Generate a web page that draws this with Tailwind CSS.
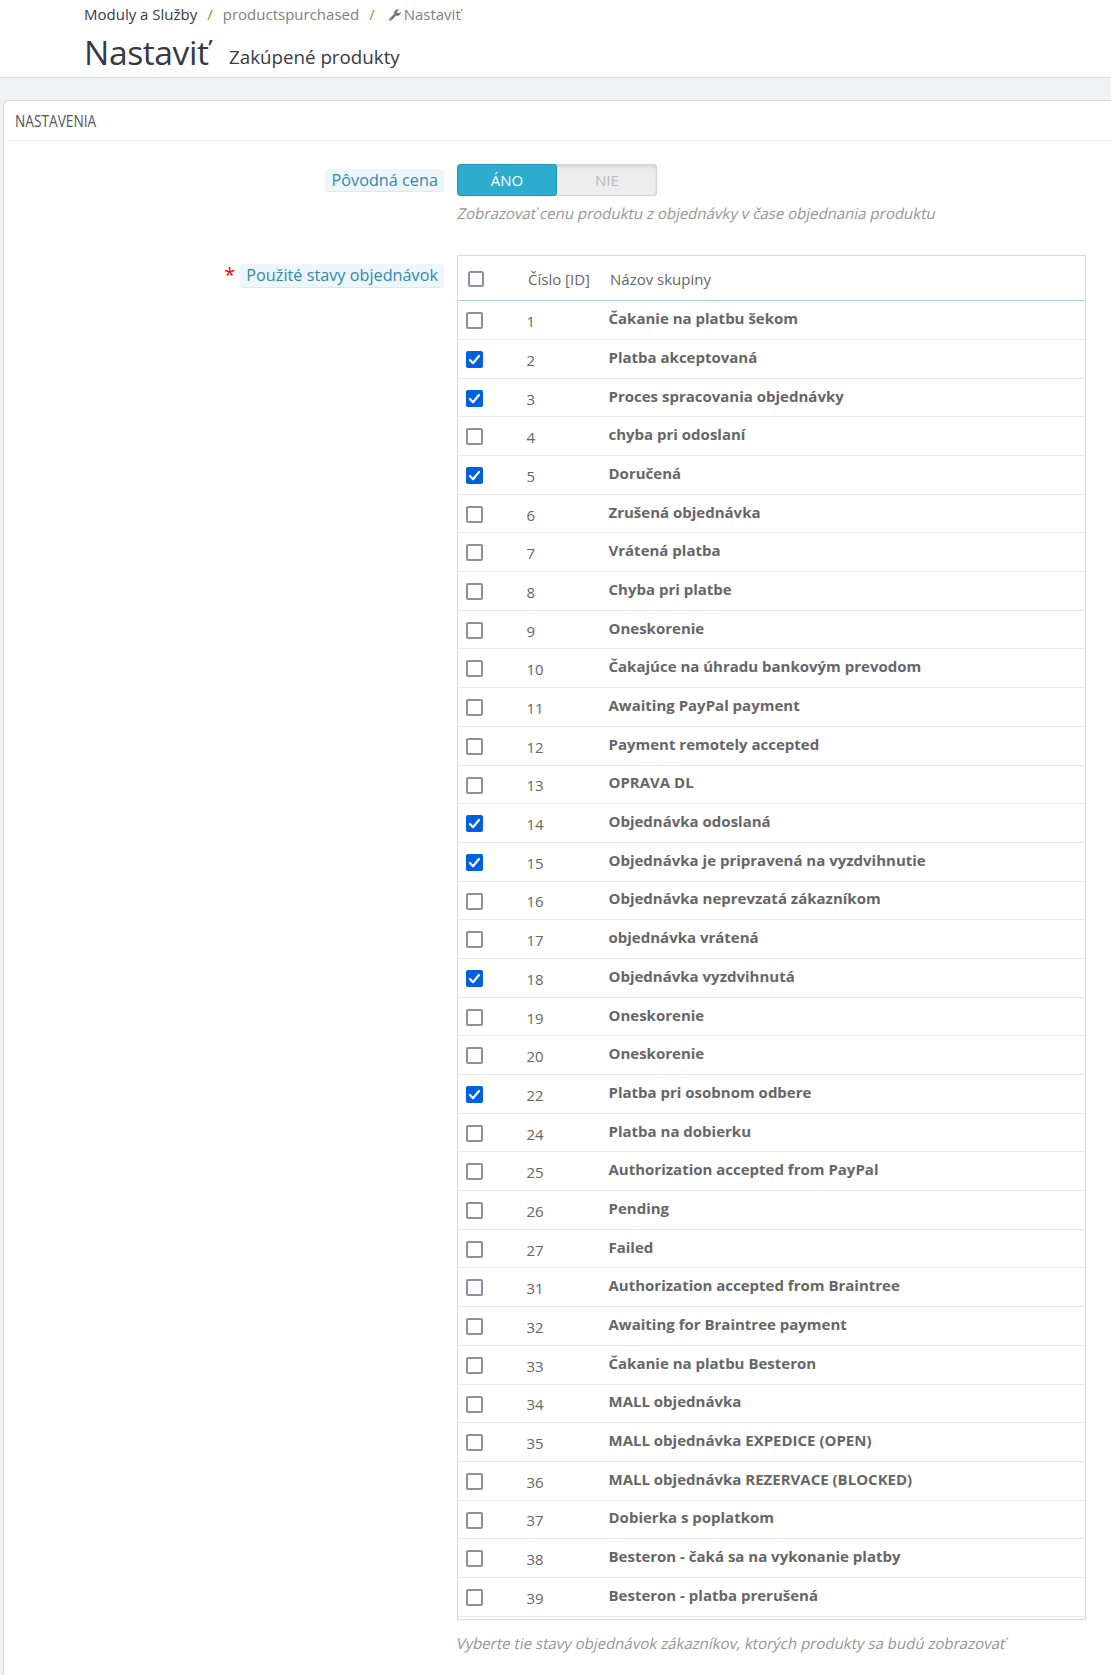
<!DOCTYPE html>
<html lang="sk">
<head>
<meta charset="utf-8">
<title>Nastaviť</title>
<script src="https://cdn.jsdelivr.net/npm/@tailwindcss/browser@4"></script>
</head>
<body class="bg-[#eff1f2] font-['Open_Sans','Noto_Sans',sans-serif] text-[#666] h-[1675px] overflow-hidden flex flex-col">
<header class="h-[78px] shrink-0 bg-white border-b border-[#dcdee0] pl-[84px] text-[#363a41]">
  <nav class="flex items-center h-[29px] text-[15px] whitespace-nowrap">
    <span>Moduly a Služby</span>
    <span class="w-[25.500px] text-center text-[#5fa82f]">/</span>
    <span class="text-[#808080]">productspurchased</span>
    <span class="w-[25.500px] text-center text-[#5fa82f]">/</span>
    <svg class="w-[12px] h-[12px] ml-[4px] mr-[3px]" viewBox="0 0 12 12" fill="#777"><path fill-rule="evenodd" d="M.5 9.6 5.3 4.8A3.6 3.6 0 0 1 8.7.2c.6 0 1.300.2 1.800.5L8.300 2v1.500l1.400.8 2.100-1.300c.2.700 0 1.500-.3 2.100a3.600 3.600 0 0 1-4.300 1.500L2.400 11.500a1.300 1.300 0 0 1-1.900 0 1.300 1.300 0 0 1 0-1.900zM1.700 10a.5.5 0 1 0 0 1 .5.5 0 0 0 0-1z"/></svg>
    <span class="text-[#808080]">Nastaviť</span>
  </nav>
  <div class="flex items-baseline h-[48px] whitespace-nowrap">
    <h1 class="text-[33.600px] leading-[46px] w-[145px] tracking-[-0.400px]">Nastaviť</h1>
    <h4 class="text-[18.750px] -translate-y-px">Zakúpené produkty</h4>
  </div>
</header>
<main class="mt-[22px] ml-[3px] flex-1 bg-white border-l border-t border-[#d0d8db] rounded-tl-[6px] pl-[5px]">
  <h3 class="h-[40px] border-b border-[#eaedef] pl-[6px] flex items-center text-[16.800px] text-[#555]"><span class="origin-left scale-x-[0.815]">NASTAVENIA</span></h3>
  <div class="flex mt-[23px]">
    <div class="w-[435px] shrink-0 flex justify-end items-start pt-[5px]">
      <span class="h-[23px] leading-[22px] px-[6px] rounded-[4px] bg-[#edf7fb] border-b border-[#d8ebf3] text-[#3586ae] text-[16.250px]">Pôvodná cena</span>
    </div>
    <div class="ml-[13px]">
      <div class="flex w-[200px] h-[32px] rounded-[4px] bg-[#ededed] shadow-[inset_0_0_0_1px_#d4d4d4,inset_0_2px_4px_#00000026] text-[15px] text-center leading-[32px] overflow-hidden">
        <span class="w-[100px] bg-[#2eacce] text-white rounded-[3px] border border-[#2494b3] leading-[30px]">ÁNO</span>
        <span class="w-[100px] text-[#bbb]">NIE</span>
      </div>
      <p class="w-max -skew-x-12 text-[15px] leading-[20px] mt-[7px] ml-[0.500px] text-[#959595]">Zobrazovať cenu produktu z objednávky v čase objednania produktu</p>
    </div>
  </div>
  <div class="flex mt-[32px]">
    <div class="w-[435px] shrink-0 flex justify-end items-start pt-[9px]">
      <span class="text-[#f00] text-[20px] leading-[22px] mr-[5px]">*</span>
      <span class="h-[24px] leading-[22px] px-[6px] rounded-[4px] bg-[#edf7fb] border-b border-[#d8ebf3] text-[#3586ae] text-[16.250px]">Použité stavy objednávok</span>
    </div>
    <div class="ml-[13px] w-[629px]">
      <div class="h-[1365px] border border-[#dadada]">
        <div class="h-[45px] border-b border-[#a0d0eb] flex items-start text-[15px] leading-[20px]">
          <span class="w-[16px] h-[16px] mt-[15px] ml-[10px] rounded-[2px] border-2 border-[#8f8f9d]"></span>
          <span class="ml-[44px] w-[82px] mt-[13px]">Číslo [ID]</span>
          <span class="mt-[13px]">Názov skupiny</span>
        </div>
        <div id="rows" class="pt-[0.250px]"></div>
      </div>
      <p class="w-max -skew-x-12 text-[15px] leading-[20px] mt-[13px] text-[#959595] whitespace-nowrap">Vyberte tie stavy objednávok zákazníkov, ktorých produkty sa budú zobrazovať</p>
    </div>
  </div>
</main>
<script>
const states = [
  [1,'Čakanie na platbu šekom'],[2,'Platba akceptovaná',1],[3,'Proces spracovania objednávky',1],[4,'chyba pri odoslaní'],
  [5,'Doručená',1],[6,'Zrušená objednávka'],[7,'Vrátená platba'],[8,'Chyba pri platbe'],[9,'Oneskorenie'],
  [10,'Čakajúce na úhradu bankovým prevodom'],[11,'Awaiting PayPal payment'],[12,'Payment remotely accepted'],[13,'OPRAVA DL'],
  [14,'Objednávka odoslaná',1],[15,'Objednávka je pripravená na vyzdvihnutie',1],[16,'Objednávka neprevzatá zákazníkom'],
  [17,'objednávka vrátená'],[18,'Objednávka vyzdvihnutá',1],[19,'Oneskorenie'],[20,'Oneskorenie'],[22,'Platba pri osobnom odbere',1],
  [24,'Platba na dobierku'],[25,'Authorization accepted from PayPal'],[26,'Pending'],[27,'Failed'],[31,'Authorization accepted from Braintree'],
  [32,'Awaiting for Braintree payment'],[33,'Čakanie na platbu Besteron'],[34,'MALL objednávka'],[35,'MALL objednávka EXPEDICE (OPEN)'],
  [36,'MALL objednávka REZERVACE (BLOCKED)'],[37,'Dobierka s poplatkom'],[38,'Besteron - čaká sa na vykonanie platby'],[39,'Besteron - platba prerušená']
];
document.getElementById('rows').innerHTML = states.map(([id, name, on]) => `
  <div class="h-[38.690px] border-b border-[#eaeaea] flex items-start text-[15px] leading-[20px]">
    ${on ? '<span class="w-[17px] h-[17px] mt-[11px] ml-[8px] rounded-[2px] bg-[#0060df]"><svg viewBox="0 0 17 17" fill="none" stroke="#fff" stroke-width="2.200" stroke-linecap="round" stroke-linejoin="round"><path d="M4 9l3 3.200 6-7.200"/></svg></span>'
         : '<span class="w-[17px] h-[17px] mt-[11px] ml-[8px] rounded-[2px] border-2 border-[#8f8f9d]"></span>'}
    <span class="ml-[43.500px] w-[82px] mt-[9.900px]">${id}</span>
    <b class="mt-[6.900px] font-bold">${name}</b>
  </div>`).join('');
</script>
</body>
</html>
